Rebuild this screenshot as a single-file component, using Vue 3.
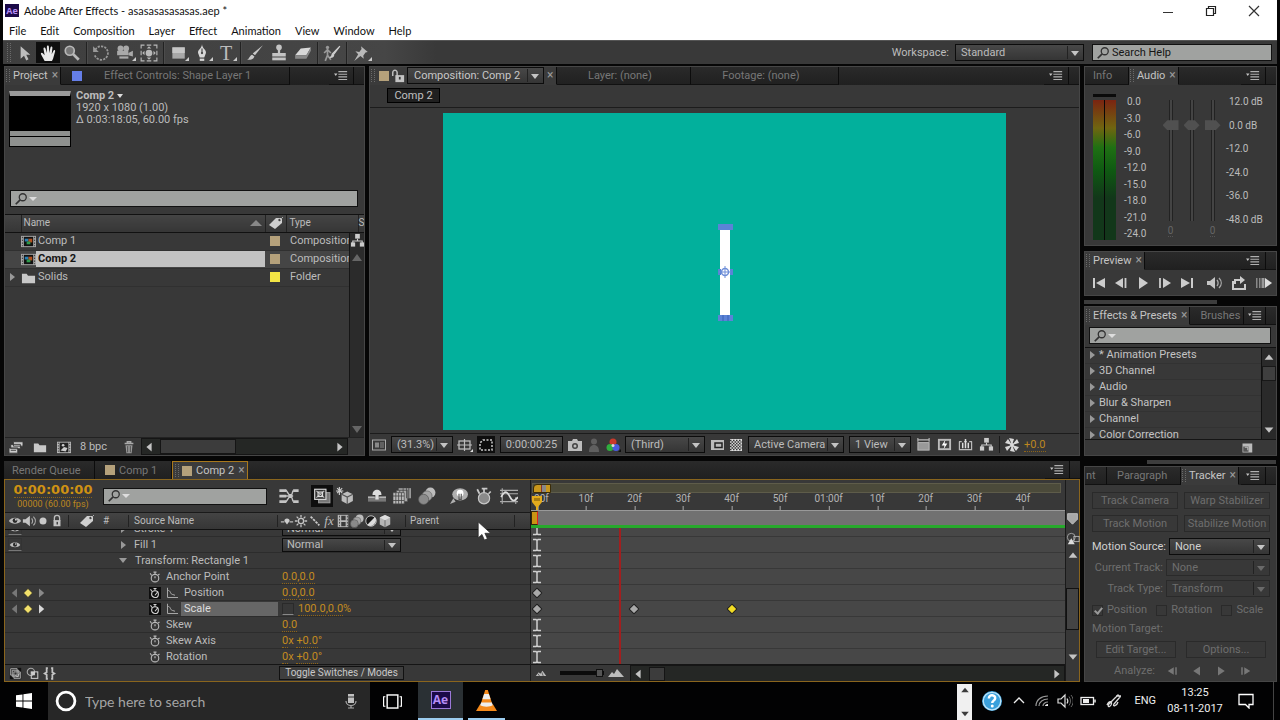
<script setup>
import { h } from 'vue'

const art = {
  select: '<path d="M5 2v11l3-2.6 2 4.2 2-1-2-4h3.6z" fill="#bdbdbd"/>',
  hand: '<path d="M5 15 2 9.500c-1-1.800.600-2.400 1.600-1.100L5 10 4 4.500c-.300-1.600 1.400-1.900 1.800-.400L7 8V2.500c0-1.600 1.700-1.600 1.800 0L9.200 8l1-4.800c.400-1.500 1.900-1.100 1.700.4L11.300 9l1.500-3c.7-1.200 1.900-.6 1.500.7L12.500 13l-1 2z" fill="#e8e8e8"/>',
  zoom: '<circle cx="6" cy="6" r="4" fill="#777" stroke="#b9b9b9" stroke-width="1.500"/><path d="m9 9 5 5" stroke="#b9b9b9" stroke-width="2.500"/>',
  rotate: '<path d="M3 5a6 6 0 1 1-.5 5" fill="none" stroke="#999" stroke-width="1.500" stroke-dasharray="2 1"/><path d="M1 2v5h5z" fill="#999"/>',
  camera: '<circle cx="4" cy="4" r="2.600" fill="#a9a9a9"/><circle cx="9" cy="4" r="2.600" fill="#a9a9a9"/><rect x="1" y="6" width="10" height="4" fill="#a9a9a9"/><rect x="3" y="11" width="8" height="2" fill="#a9a9a9"/><path d="m11 8 4-2v5l-4-1z" fill="#a9a9a9"/>',
  pan: '<path d="M1 4V1h3M6 1h4M12 1h3v3M1 12v3h3M6 15h4M12 15h3v-3M1 6v4M15 6v4" fill="none" stroke="#b9b9b9"/><circle cx="8" cy="8" r="3" fill="#b9b9b9"/><path d="M8 2l2 2H6zM8 14l2-2H6zM2 8l2-2v4zM14 8l-2-2v4z" fill="#b9b9b9"/>',
  rect: '<rect x="3" y="3" width="11" height="10" fill="#a8a8a8"/><path d="M3 3h11v5H3z" fill="#c6c6c6"/>',
  pen: '<path d="M8 0c0 4 4 5 3.500 8L10 12H6L4.500 8C4 5 8 4 8 0z" fill="#d8d8d8"/><path d="M8 4v4" stroke="#444"/><circle cx="8" cy="8" r="1" fill="#444"/><path d="M6 13h4v2H6z" fill="#d8d8d8"/>',
  brush: '<path d="M15 1 8 10 6 8.500z" fill="#c8c8c8"/><path d="M5.500 9.500 7.500 11c-1 3-4 3-6.500 3 2-1 2.500-4 4.500-4.500z" fill="#c8c8c8"/>',
  stamp: '<circle cx="8" cy="3" r="2.500" fill="#c4c4c4"/><path d="M7 5h2v3h5v3H2V8h5z" fill="#c4c4c4"/><rect x="2" y="12" width="12" height="2.500" fill="#c4c4c4"/>',
  eraser: '<path d="m6 4 9-1-4 7H1z" fill="#d8d8d8"/><path d="M1 10h10v3H1zM11 10l4-7v3l-4 7z" fill="#8a8a8a"/>',
  roto: '<circle cx="4" cy="3" r="1.500" fill="#999"/><path d="M4 5v5l-2 5M4 10l3 4M1 8l3-3 3 3" fill="none" stroke="#999" stroke-width="1.500"/><path d="m15 2-6 8-1-1z" fill="#ccc" stroke="#ccc"/><path d="M9 9c-2 0-2 3-4 3 2 1 5 0 5-2z" fill="#ccc"/>',
  pin: '<path d="m8 2 6 5-2 .500-2 3 .500 2.500-3-2.300L2 15l3.500-6L3 6.500l3.500.500 2-2.500z" fill="#b9b9b9"/>',
  menu: '<path d="M0 5h4L2 8z" fill="#c4c4c4"/><path d="M5 3h10M5 6h10M5 9h10M5 12h10" stroke="#b0b0b0" stroke-width="1.400"/>',
  lock: '<path d="M2 8V4a2.500 2.500 0 0 1 5 0v4" fill="none" stroke="#bdbdbd" stroke-width="1.700"/><rect x="5" y="7" width="10" height="8" fill="#c4c4c4"/><rect x="9" y="9" width="2" height="3" fill="#333"/>',
  closed: '<path d="M5 8V4.500a3 3 0 0 1 6 0V8" fill="none" stroke="#bdbdbd" stroke-width="1.500"/><rect x="4" y="7" width="8" height="7" fill="#c4c4c4"/><rect x="7.500" y="9" width="1.500" height="3" fill="#333"/>',
  search: '<circle cx="10" cy="6" r="4" fill="none" stroke="#333" stroke-width="1.500"/><path d="m7 9-5 5" stroke="#333" stroke-width="2"/>',
  film: '<rect x="0" y="2" width="16" height="12" fill="#a8a8a8"/><rect x="3" y="3" width="10" height="10" fill="#111"/><path d="M1.500 3v10M14.500 3v10" stroke="#333" stroke-dasharray="1.500 1.500"/><rect x="4" y="5" width="4" height="3" fill="#2a7fb4"/><rect x="8" y="5" width="4" height="4" fill="#b4501f"/><rect x="6" y="8" width="4" height="3" fill="#2f9a4c"/>',
  folder: '<path d="M1 4h5l1.500 2H15v8H1z" fill="#c8c8c8"/>',
  tag: '<path d="M1 10 8 3l6 0 0 5-7 6z" fill="#cfcfcf"/><circle cx="11.500" cy="5" r="1.200" fill="#444"/><path d="m12 5 3-3" stroke="#aaa"/>',
  tree: '<rect x="5.500" y="1" width="5" height="5" fill="#ccc"/><path d="M8 6v3M3 11V8.500h10V11" fill="none" stroke="#ccc" stroke-width="1.200"/><rect x="1" y="10" width="4.500" height="4.500" fill="#ccc"/><rect x="10.500" y="10" width="4.500" height="4.500" fill="#ccc"/>',
  interpret: '<path d="M5 2h11v5H5zM2 5h11v5H2zM0 9h10v6H0z" fill="#ccc" stroke="#333"/><path d="M2 12h6" stroke="#555"/>',
  comp: '<rect x="0" y="2" width="16" height="13" fill="#b8b8b8"/><rect x="3" y="3" width="10" height="11" fill="#222"/><path d="M1.500 3v11M14.500 3v11" stroke="#333" stroke-dasharray="1.500 1.500"/><circle cx="7" cy="6" r="1.500" fill="#ccc"/><path d="m4 12 4-4 4 1-2 4z" fill="#ccc"/>',
  trash: '<path d="M3 4h10M6 4V2h4v2" fill="none" stroke="#aaa" stroke-width="1.500"/><path d="M4 6h8l-1 9H5z" fill="#999"/><path d="M6.500 7v7M9.500 7v7" stroke="#444"/>',
  left: '<path d="M11 3v10L5 8z" fill="#c4c4c4"/>',
  right: '<path d="M5 3v10l6-5z" fill="#c4c4c4"/>',
  up: '<path d="M3 11h10L8 5z" fill="#c4c4c4"/>',
  down: '<path d="M3 5h10l-5 6z" fill="#c4c4c4"/>',
  always: '<rect x="1.500" y="3" width="13" height="10" fill="none" stroke="#aaa"/><rect x="4" y="5.500" width="4" height="5" fill="#888"/><path d="M9 6h4M9 8h4M9 10h4" stroke="#888"/>',
  grid: '<rect x="2" y="4" width="11" height="8" fill="none" stroke="#bbb" stroke-width="1.300"/><path d="M7.500 2v12M0 8h15" stroke="#bbb" stroke-width="1.200"/><path d="m13 15 3 0 0-3z" fill="#ddd"/>',
  mask: '<path d="M5 3h9v10H2V6z" fill="none" stroke="#ccc" stroke-width="1.500" stroke-dasharray="2 1.500"/>',
  snap: '<path d="M1 4h4l1-2h4l1 2h4v10H1z" fill="#bdbdbd"/><circle cx="8" cy="9" r="3" fill="#444"/><circle cx="8" cy="9" r="1.500" fill="#bdbdbd"/>',
  person: '<circle cx="8" cy="4.500" r="3" fill="#5f5f5f"/><path d="M3 15c0-5 2-7 5-7s5 2 5 7z" fill="#5f5f5f"/>',
  rgb: '<circle cx="8" cy="5" r="3.500" fill="#c83a2c"/><circle cx="5" cy="10.500" r="3.500" fill="#2fae3e"/><circle cx="11" cy="10.500" r="3.500" fill="#4a5ce0"/><circle cx="8" cy="8.500" r="1.500" fill="#ddd"/><path d="m13 15h3v-3z" fill="#111"/>',
  roi: '<rect x="2" y="3" width="13" height="10" fill="#bbb"/><rect x="6" y="6" width="7" height="4.500" fill="#bbb" stroke="#222" stroke-width="1.500"/>',
  checker: '<rect x="2" y="2" width="12" height="12" fill="#ddd"/><path d="M2 3.500h12M2 6.500h12M2 9.500h12M2 12.500h12" stroke="#333" stroke-width="1.500" stroke-dasharray="1.500 1.500"/><path d="M3.500 5h10M3.500 8h10M3.500 11h10" stroke="#333" stroke-width="1.500" stroke-dasharray="1.500 1.500"/>',
  aspect: '<rect x="2" y="6" width="12" height="8" fill="#999" stroke="#bbb"/><path d="M2 3h12M2 1v4M14 1v4" stroke="#bbb" stroke-width="1.200"/>',
  fast: '<rect x="1" y="2" width="14" height="12" fill="#bbb"/><rect x="3" y="4" width="10" height="8" fill="#444"/><path d="m9 3-4 6h3l-1 4 4-6H8z" fill="#fff"/>',
  tline: '<path d="M1.500 5v8.500h13V5M1 5h3M6.500 5h3M12 5h3" fill="none" stroke="#bbb" stroke-width="1.300"/><path d="M5 12V6M8 12V2M11 12V6" stroke="#ddd" stroke-width="1.600"/>',
  exposure: '<path d="M8 8 5 1l5 1zM8 8l5-6 2 4zM8 8l7 2-3 4zM8 8l3 7-5-1zM8 8l-5 6-2-4zM8 8 1 6l3-4z" fill="#d8d8d8"/><circle cx="8" cy="8" r="2" fill="#d8d8d8"/>',
  eye: '<path d="M1 8c3-5 11-5 14 0-3 4-11 4-14 0z" fill="#bdbdbd"/><circle cx="8" cy="7.500" r="2.700" fill="#2a2a2a"/><circle cx="9" cy="6.500" r="1" fill="#ddd"/>',
  speaker: '<path d="M1 6h3l5-4v12l-5-4H1z" fill="#c4c4c4"/><path d="M11 5c1.500 2 1.500 4 0 6M13 3c3 3 3 7 0 10" fill="none" stroke="#aaa" stroke-width="1.300"/>',
  dot: '<circle cx="8" cy="8" r="4" fill="#c8c8c8"/>',
  flow: '<path d="M1 3h5v2H1zM1 7h5v2H1zM1 11h5v2H1zM11 3h4v2h-4zM11 11h4v2h-4z" fill="#c4c4c4"/><path d="M5 4h1l2 3h2l1-3M5 8h6M5 12h1l2-3h2l1 3" fill="none" stroke="#c4c4c4"/>',
  live: '<rect x="5" y="5" width="10" height="9" fill="#777" stroke="#999"/><rect x="1.500" y="2" width="10" height="9" fill="#333" stroke="#ddd"/><path d="m3 3.500 7 6M10 3.500l-7 6" stroke="#bbb"/><rect x="4.500" y="4.500" width="4" height="4" fill="none" stroke="#ddd"/>',
  draft: '<path d="m10 4 5 2.500v6L10 15l-5-2.500v-6z" fill="#bdbdbd"/><path d="m5 6.500 5 2.500 5-2.500M10 9v6" fill="none" stroke="#555"/><path d="M3 0v7M0 3.500h6.500M1 1l4.500 4.500M5.500 1 1 5.500" stroke="#ccc"/>',
  shy: '<path d="M0 9h16v4H0z" fill="#777"/><path d="M4 7c0-6 8-6 8 0H9.500v4h-3V7z" fill="#ddd"/><path d="M0 9h6M10 9h6" stroke="#ccc"/>',
  blend: '<path d="M5 1h11v9H5z" fill="#999"/><path d="M3 3h10v10H3z" fill="#aaa" stroke="#444" stroke-width=".600"/><path d="M0 5h10v10H0z" fill="#bbb" stroke="#444" stroke-width=".600"/><path d="M2.500 5v10M5 5v10M7.500 5v10M0 8h10M0 12h10M6 3v2M9 1v4M12 1v9M14 1v9" stroke="#444" stroke-width=".700"/>',
  blur: '<circle cx="11" cy="5" r="4.500" fill="#bdbdbd"/><circle cx="8" cy="8" r="4.500" fill="#a4a4a4" stroke="#666" stroke-width=".600"/><circle cx="5" cy="11" r="4.500" fill="#8a8a8a" stroke="#555" stroke-width=".600"/>',
  brain: '<ellipse cx="9" cy="6.500" rx="7" ry="5.500" fill="#b0b0b0"/><circle cx="9" cy="5.500" r="3" fill="#fff"/><path d="M8 6v5h2V6" stroke="#555" fill="none"/><path d="M3 10 0 15l5-2z" fill="#b0b0b0"/>',
  watch: '<circle cx="8" cy="9.500" r="5" fill="none" stroke="#b8b8b8" stroke-width="1.500"/><path d="M6 1.500h4M8 2v3M1.500 3l2 3M14 4l-2 1.500M8 9.500V7" stroke="#b8b8b8" stroke-width="1.500"/>',
  watchbig: '<circle cx="8" cy="10" r="5" fill="#8a8a8a" stroke="#c8c8c8"/><path d="M6 1.500h5M8 2v3M2 2l2 4M14 4l-2 2" stroke="#c8c8c8" stroke-width="1.500"/>',
  watchon: '<rect width="16" height="16" fill="#0d0d0d"/><circle cx="8" cy="9.500" r="4.500" fill="none" stroke="#d0d0d0" stroke-width="1.500"/><path d="M6 2h4M8 2v3M2 3l2 3M8 11l4-5" stroke="#d0d0d0" stroke-width="1.500"/>',
  graph: '<path d="M2 1v13h14" fill="none" stroke="#aaa" stroke-width="1.300"/><path d="M2 5c4-2 4 6 7 5l3 1" fill="none" stroke="#aaa" stroke-width="1.300"/>',
  curve: '<path d="M0 3h16M0 6h16M0 13h16M2 1v14M14 9v6" stroke="#aaa"/><path d="M1 9c3-6 5-6 8 0 2 4 4 4 7 0" fill="none" stroke="#ddd" stroke-width="1.500"/>',
  shysm: '<path d="M1 9h4M11 9h4" stroke="#bbb" stroke-width="1.500"/><path d="M5 8a3 3 0 0 1 6 0L8 12z" fill="#ccc"/>',
  sun: '<circle cx="8" cy="8" r="3" fill="none" stroke="#c4c4c4" stroke-width="1.500"/><path d="M8 1v3M8 12v3M1 8h3M12 8h3M3 3l2 2M11 11l2 2M13 3l-2 2M5 11l-2 2" stroke="#c4c4c4" stroke-width="1.500"/>',
  slash: '<path d="m3 3 10 10" stroke="#c8c8c8" stroke-width="2" stroke-dasharray="3 1"/>',
  filmsm: '<rect x="2" y="1" width="12" height="14" fill="#b8b8b8"/><path d="M6 2h5v5H6zM6 9h5v5H6z" fill="#3a3a3a"/><path d="M4 2v12M13 2v12" stroke="#444" stroke-dasharray="2 1.500"/>',
  half: '<circle cx="8" cy="8" r="6" fill="#1a1a1a" stroke="#ccc"/><path d="M12.500 3.500A6.500 6.500 0 0 1 3.500 12.500z" fill="#ddd"/>',
  cube: '<path d="m8 1 6 3v8l-6 3-6-3V4z" fill="#b4b4b4"/><path d="m2 4 6 3 6-3-6-3z" fill="#ddd"/><path d="M8 7v8" stroke="#666"/>',
  prevkey: '<path d="M12 2v12L5 8z" fill="#777"/>',
  nextkey: '<path d="M4 2v12l7-6z" fill="#8a8a8a"/>',
  nextlit: '<path d="M4 2v12l7-6z" fill="#d8d8d8"/>',
  keyon: '<path d="m8 2 6 6-6 6-6-6z" fill="#f2e06a" stroke="#222"/>',
  key: '<path d="m8 1 7 7-7 7-7-7z" fill="#a9a9a9" stroke="#1d1d1d" stroke-width="1.500"/>',
  keysel: '<path d="m8 1 7 7-7 7-7-7z" fill="#f2dc24" stroke="#1d1d1d" stroke-width="1.500"/>',
  ibeam: '<path d="M4 2.500h3L8 3.500 9 2.500h3M4 13.500h3l1-1 1 1h3M8 3.500v9" fill="none" stroke="#d0d0d0" stroke-width="1.500"/>',
  lay1: '<rect x="1" y="1" width="14" height="14" fill="#111"/><path d="M2 2h8v8H2zM4 4h8v8H4zM6 6h8v8H6z" fill="#333" stroke="#bbb"/><path d="m8 10 2 2 3-4" fill="none" stroke="#ddd"/>',
  lay2: '<circle cx="6" cy="6" r="4.500" fill="none" stroke="#aaa" stroke-width="1.300"/><rect x="6.500" y="6" width="8" height="8" fill="none" stroke="#ccc" stroke-width="1.300"/><path d="M6 6h5v4H7z" fill="#ccc"/>',
  lay3: '<path d="M6 1.500H4.500v5L2 8l2.500 1.500v5H6M10 1.500h1.500v5L14 8l-2.500 1.500v5H10" fill="none" stroke="#c4c4c4" stroke-width="2.200"/>',
  mtnS: '<path d="m1 12 4-5 2 2 3-4 5 7z" fill="#bbb"/><path d="m4 9 2 3M9 7l2 5" stroke="#444"/>',
  mtnL: '<path d="m0 12 4-5 2 2 3-5 7 8z" fill="#bbb"/>',
  marker: '<path d="M2 2h12v7l-6 6-6-6z" fill="#a8a8a8" stroke="#ccc"/>',
  compbtn: '<circle cx="6" cy="6" r="4.500" fill="none" stroke="#aaa"/><rect x="9" y="5" width="6" height="6" fill="none" stroke="#bbb"/><path d="m2 14 4-7 4 7z" fill="#ddd"/>',
  first: '<path d="M3 3v10" stroke="#ccc" stroke-width="2"/><path d="M14 3v10L5 8z" fill="#ccc"/>',
  back: '<path d="M10 3v10L2 8z" fill="#ccc"/><path d="M12.500 3v10" stroke="#ccc" stroke-width="1.800"/>',
  play: '<path d="M4 2v12l9-6z" fill="#ccc"/>',
  fwd: '<path d="M6 3v10l8-5z" fill="#ccc"/><path d="M3 3v10" stroke="#ccc" stroke-width="1.800"/>',
  last: '<path d="M13 3v10" stroke="#ccc" stroke-width="2"/><path d="M2 3v10l9-5z" fill="#ccc"/>',
  loop: '<path d="M4 7H2v7h12V9" fill="none" stroke="#ccc" stroke-width="2"/><path d="M4 9V5h6" fill="none" stroke="#ccc" stroke-width="2"/><path d="M9 1v8l5-4z" fill="#ccc"/>',
  ram: '<path d="M0 3h1.500v10H0zM3 3h1.500v10H3z" fill="#888"/><path d="M5.500 3h3v10h-3z" fill="#999"/><path d="M9 3v10l7-5z" fill="#ddd"/>',
  newpre: '<rect x="2" y="2" width="13" height="12" fill="#bbb"/><rect x="3" y="6" width="7" height="7" fill="#555"/><path d="M5 7h4v4" fill="none" stroke="#ddd"/>',
  aback: '<path d="M9 3v10L1 8zM11 3h2v10h-2z" fill="#777"/>',
  aleft: '<path d="M12 2v12L3 8z" fill="#777"/>',
  aright: '<path d="M4 2v12l9-6z" fill="#777"/>',
  afwd: '<path d="M7 3v10l8-5zM3 3h2v10H3z" fill="#777"/>',
  win: '<path d="M0 2.300 6.500 1.400v6.100H0zM7.400 1.300 16 0v7.500H7.400zM0 8.400h6.500v6.200L0 13.700zM7.400 8.400H16V16l-8.600-1.200z" fill="#fff"/>',
  ring: '<circle cx="8" cy="8" r="6.500" fill="none" stroke="#fff" stroke-width="2"/>',
  mic: '<rect x="5" y="1" width="6" height="9" fill="#c0c0c0"/><path d="M5 4h6" stroke="#333"/><path d="M3 8c0 6 10 6 10 0M8 12v3M5 15h6" fill="none" stroke="#aaa" stroke-width="1.200"/>',
  task: '<rect x="3.500" y="2.500" width="9" height="11" fill="none" stroke="#fff" stroke-width="1.200"/><path d="M2 4H.500v8H2M14 4h1.500v8H14" fill="none" stroke="#fff"/>',
  vlc: '<path d="M3 11h10l3 5H0z" fill="#f58a1b"/><path d="M7 0h2l4 12.500c-2 1.500-8 1.500-10 0z" fill="#f58a1b"/><path d="m6.200 3 3.600 0 1.300 4H4.900zM3.900 9.500h8.200l.7 2.200c-2 1.300-7.600 1.300-9.600 0z" fill="#eee"/>',
  help: '<circle cx="8" cy="8" r="8" fill="#3aa0dc"/><circle cx="8" cy="8" r="7" fill="none" stroke="#bfe3f7"/><path d="M5.500 6c0-4 5.500-3 5 0-.300 1.800-2.300 1.700-2.300 3.500" fill="none" stroke="#fff" stroke-width="2"/><circle cx="8.200" cy="12" r="1.200" fill="#fff"/>',
  caret: '<path d="m3 10 5-5 5 5" fill="none" stroke="#eee" stroke-width="1.300"/>',
  wifi: '<path d="M2 13c0-6 5-10 12-10M5 13c0-4 4-7 9-7M9 13c0-2 2-4 5-4" fill="none" stroke="#999" stroke-width="1.200"/><path d="M11 13c0-1 1-2 3-2v2z" fill="#eee"/>',
  vol: '<path d="M1 6h3l4-4v12l-4-4H1z" fill="none" stroke="#ddd" stroke-width="1.200"/><path d="M10 5.500c1 1.500 1 3.500 0 5" fill="none" stroke="#ddd" stroke-width="1.200"/><path d="M12 3.500c2 3 2 6 0 9M14 2c3 4 3 8 0 12" fill="none" stroke="#666"/>',
  batt: '<rect x="1" y="4.500" width="12.500" height="7" fill="none" stroke="#eee" stroke-width="1.300"/><rect x="3" y="6" width="6" height="4" fill="#eee"/><path d="M15 6.500v3" stroke="#eee" stroke-width="1.500"/>',
  ink: '<path d="M1 12c2-5 6-4 4 0-2 3-4 1-2-1l9-9 2 2-6 7c-2 3 3 2 4-2M10 3l5 0" fill="none" stroke="#ddd" stroke-width="1.300"/>',
  note: '<path d="M1 1.500h14v10h-4V15l-3.500-3.500H1z" fill="none" stroke="#fff" stroke-width="1.300"/>',
  min: '<path d="M3 9.500h10" stroke="#333"/>',
  max: '<path d="M3.500 5.500h7v7h-7zM5.500 5.500v-2h7v7h-2" fill="none" stroke="#222" stroke-width="1.200"/>',
  x: '<path d="m3 3 10 10M13 3 3 13" stroke="#333" stroke-width="1.200"/>',
  cursor: '<path d="M2 0v14l3.300-3 2.200 5 2.600-1.100-2.200-4.900H13z" fill="#fff" stroke="#222" stroke-width=".600"/>'
}
const Icon = (p) => h('svg', { viewBox: '0 0 16 16', width: p.s || 16, height: p.s || 16, class: 'ico', 'aria-hidden': 'true', innerHTML: art[p.n] })
Icon.props = ['n', 's']

const menus = ['File', 'Edit', 'Composition', 'Layer', 'Effect', 'Animation', 'View', 'Window', 'Help']
const tools = [['select', 'hand', 'zoom'], ['rotate', 'camera', 'pan'], ['rect', 'pen', 'type'], ['brush', 'stamp', 'eraser'], ['roto'], ['pin']]
const flyouts = ['camera', 'rect', 'pen', 'type', 'pin']
const items = [
  { name: 'Comp 1', icon: 'film', type: 'Composition', color: 'tan' },
  { name: 'Comp 2', icon: 'film', type: 'Composition', color: 'tan', sel: true },
  { name: 'Solids', icon: 'folder', type: 'Folder', color: 'yellow' }
]
const meter = ['0.0', '-3.0', '-6.0', '-9.0', '-12.0', '-15.0', '-18.0', '-21.0', '-24.0']
const scale = ['12.0 dB', '0.0 dB', '-12.0', '-24.0', '-36.0', '-48.0 dB']
const effects = ['* Animation Presets', '3D Channel', 'Audio', 'Blur & Sharpen', 'Channel', 'Color Correction']
const rows = [
  { name: 'Stroke 1', kind: 'fill' },
  { name: 'Fill 1', kind: 'fill' },
  { name: 'Transform: Rectangle 1', kind: 'group' },
  { name: 'Anchor Point', v: ['0.0', ',', '0.0'] },
  { name: 'Position', keyed: true, v: ['0.0', ',', '0.0'], keys: [0] },
  { name: 'Scale', keyed: true, sel: true, v: ['100.0', ',', '0.0', '%'], keys: [0, 20, 40] },
  { name: 'Skew', v: ['0.0'] },
  { name: 'Skew Axis', v: ['0', 'x ', '+0.0', '°'] },
  { name: 'Rotation', v: ['0', 'x ', '+0.0', '°'] }
]
const at = (f) => 1.2 + f * 0.909 + '%'
const ticks = ['10f', '20f', '30f', '40f', '50f', '01:00f', '10f', '20f', '30f', '40f'].map((t, i) => ({ t, f: (i + 1) * 10 }))
const columns = ['shysm', 'sun', 'slash', 'fx', 'filmsm', 'blur', 'half', 'cube']
const previews = ['first', 'back', 'play', 'fwd', 'last', 'speaker', 'loop', 'ram']
const tracks = [['Motion Source:', 'None', false], ['Current Track:', 'None', true], ['Track Type:', 'Transform', true]]
</script>

<template>
  <div class="app">
    <div class="window">
      <header class="title">
        <span class="ae small">Ae</span><span class="doc">Adobe After Effects - asasasasasasas.aep *</span>
        <div class="winbtns">
          <button aria-label="Minimize"><Icon n="min" /></button>
          <button aria-label="Restore"><Icon n="max" /></button>
          <button aria-label="Close"><Icon n="x" /></button>
        </div>
      </header>
      <nav class="menu"><button v-for="m in menus" :key="m">{{ m }}</button></nav>

      <div class="toolbar">
        <i class="grip"></i>
        <template v-for="(g, i) in tools" :key="i">
          <i v-if="i" class="tsep"></i>
          <button v-for="t in g" :key="t" class="tool" :class="{ on: t === 'hand', fly: flyouts.includes(t) }" :aria-label="t">
            <span v-if="t === 'type'" class="tee">T</span><Icon v-else :n="t" :s="18" />
          </button>
        </template>
        <i class="sheen"></i>
        <label class="ws" for="workspace">Workspace:</label>
        <span class="sel wssel"><select id="workspace"><option>Standard</option></select></span>
        <label class="search help"><Icon n="search" :s="14" /><input aria-label="Search Help" placeholder="Search Help"></label>
      </div>

      <main class="work">
        <div class="leftcol">
          <div class="upper">
            <section class="panel project">
              <div class="tabs">
                <div class="tab active"><i class="grip"></i>Project<b>×</b></div>
                <div class="tab fxtab"><i class="sw blue"></i><span>Effect Controls: Shape Layer 1</span></div>
                <button class="pm" aria-label="Panel menu"><Icon n="menu" :s="14" /></button><i class="end"></i>
              </div>
              <div class="info">
                <div class="thumb"><i></i><i></i></div>
                <div class="meta"><strong>Comp 2 <span class="tri"></span></strong><span>1920 x 1080 (1.00)</span><span>Δ 0:03:18:05, 60.00 fps</span></div>
              </div>
              <label class="search psearch"><Icon n="search" :s="14" /><i class="dd"></i><input aria-label="Search project"></label>
              <div class="list">
                <table>
                  <thead><tr><th class="tw"></th><th class="nm">Name<i class="sort"></i></th><th class="lb"><Icon n="tag" /></th><th class="ty">Type</th><th class="sz">S</th></tr></thead>
                  <tbody>
                    <tr v-for="it in items" :key="it.name" :class="{ picked: it.sel }">
                      <td><i v-if="it.icon === 'folder'" class="twirl"></i></td>
                      <td><div class="item"><Icon :n="it.icon" :s="15" /><span>{{ it.name }}</span></div></td>
                      <td><i class="sw" :class="it.color"></i></td>
                      <td class="tyd" colspan="2">{{ it.type }}</td>
                    </tr>
                  </tbody>
                </table>
                <div class="rail"><Icon n="tree" :s="15" /><i class="u"></i><i class="d"></i></div>
              </div>
              <div class="pfoot">
                <Icon n="interpret" /><Icon n="folder" /><Icon n="comp" /><span>8 bpc</span><Icon n="trash" class="bin" />
                <div class="hbar"><Icon n="left" :s="14" /><i></i><Icon n="right" :s="14" /></div>
              </div>
            </section>

            <section class="panel viewer">
              <div class="tabs">
                <div class="tab active vt"><i class="grip"></i><i class="sw tan"></i><Icon n="lock" :s="14" />
                  <span class="sel vsel"><select aria-label="Viewer"><option>Composition: Comp 2</option></select></span><b>×</b></div>
                <div class="tab wide">Layer: (none)</div><div class="tab wide foot">Footage: (none)</div>
                <button class="pm" aria-label="Panel menu"><Icon n="menu" :s="14" /></button><i class="end"></i>
              </div>
              <div class="crumb"><button>Comp 2</button></div>
              <div class="stage">
                <svg viewBox="0 0 563 317" class="canvas">
                  <rect width="563" height="317" fill="#02b09c" />
                  <rect x="277" y="113" width="10" height="93" fill="#fff" />
                  <g fill="#5b83d6"><path d="M275 111h15v6h-15zM275 202h15v6h-15zM275 156h3v6h-3zM287 156h3v6h-3z" /></g>
                  <path d="M280 202v6M285 202v6" stroke="#3a62b8" />
                  <circle cx="282" cy="159" r="3.500" fill="none" stroke="#6f8fd8" stroke-width="1.500" /><path d="M276 159h12M282 153v12" stroke="#6f8fd8" />
                </svg>
              </div>
              <div class="vfoot">
                <Icon n="always" />
                <span class="sel w62"><select aria-label="Magnification"><option>(31.3%)</option></select></span>
                <Icon n="grid" /><span class="pressed"><Icon n="mask" /></span>
                <button class="tc">0:00:00:25</button>
                <Icon n="snap" /><Icon n="person" /><Icon n="rgb" />
                <span class="sel w79"><select aria-label="Resolution"><option>(Third)</option></select></span>
                <Icon n="roi" /><Icon n="checker" />
                <span class="sel w96"><select aria-label="3D view"><option>Active Camera</option></select></span>
                <span class="sel w62"><select aria-label="View layout"><option>1 View</option></select></span>
                <div class="vicons"><Icon n="aspect" :s="15" /><Icon n="fast" :s="15" /><Icon n="tline" :s="15" /><Icon n="tree" :s="15" /></div>
                <i class="vsep"></i><Icon n="exposure" /><span class="hot">+0.0</span>
              </div>
            </section>
          </div>

          <section class="timeline">
            <div class="tabs ttabs">
              <div class="tab rq">Render Queue</div>
              <div class="tab c1"><i class="sw tan"></i>Comp 1</div>
              <div class="tab active c2"><i class="grip"></i><i class="sw tan"></i>Comp 2<b>×</b></div>
              <button class="pm" aria-label="Panel menu"><Icon n="menu" :s="14" /></button><i class="end"></i>
            </div>
            <div class="tbody">
              <div class="tl">
                <div class="tctl">
                  <div class="time"><strong>0:00:00:00</strong><span>00000 (60.00 fps)</span></div>
                  <label class="search tsearch"><Icon n="search" :s="14" /><i class="dd"></i><input aria-label="Search layers"></label>
                  <div class="tbtns"><Icon n="flow" :s="22" /><span class="pressed"><Icon n="live" :s="18" /></span><Icon n="draft" :s="18" class="draft" /><i></i><Icon n="shy" :s="18" /><Icon n="blend" :s="18" /><Icon n="blur" :s="18" /><i></i><Icon n="brain" :s="18" /><Icon n="watchbig" :s="18" /><Icon n="curve" :s="18" /></div>
                </div>
                <div class="thead">
                  <div class="av"><Icon n="eye" :s="14" /><Icon n="speaker" :s="14" /><Icon n="dot" :s="14" /><Icon n="closed" :s="14" /></div>
                  <div class="num"><Icon n="tag" /><span>#</span></div>
                  <div class="src">Source Name</div>
                  <div class="sws"><template v-for="c in columns" :key="c"><em v-if="c === 'fx'">fx</em><Icon v-else :n="c" :s="14" /></template></div>
                  <div class="par">Parent</div><div class="tail"></div>
                </div>
                <div class="rows">
                  <div v-for="r in rows" :key="r.name" class="row">
                    <div class="av">
                      <span v-if="r.kind === 'fill'" class="eyebox"><Icon n="eye" :s="12" /></span>
                      <template v-if="r.keyed"><Icon n="prevkey" :s="12" /><Icon n="keyon" :s="12" /><Icon :n="r.sel ? 'nextlit' : 'nextkey'" :s="12" /></template>
                    </div>
                    <div class="nme" :class="{ prop: !r.kind }">
                      <i v-if="r.kind" class="twirl" :class="{ open: r.kind === 'group' }"></i>
                      <Icon v-else :n="r.keyed ? 'watchon' : 'watch'" :s="12" />
                      <Icon v-if="r.keyed" n="graph" :s="12" />
                      <span :class="{ hl: r.sel, kn: r.keyed }">{{ r.name }}</span>
                    </div>
                    <div class="val">
                      <span v-if="r.kind === 'fill'" class="sel mode"><select aria-label="Blend mode"><option>Normal</option></select></span>
                      <input v-if="r.sel" type="checkbox" aria-label="Constrain proportions">
                      <span v-if="r.v" class="nums"><template v-for="(p, i) in r.v" :key="i"><u v-if="/\d/.test(p)">{{ p }}</u><template v-else>{{ p }}</template></template></span>
                    </div>
                  </div>
                </div>
                <div class="tfoot"><Icon n="lay1" :s="13" /><Icon n="lay2" :s="13" /><Icon n="lay3" :s="13" /><button>Toggle Switches / Modes</button></div>
              </div>

              <div class="tr">
                <div class="navi"><i></i></div>
                <div class="ruler">
                  <span v-for="k in ticks" :key="k.f" class="tick" :style="{ left: at(k.f) }">{{ k.t }}</span>
                  <span class="tick zero" :style="{ left: at(0) }">0:00f</span>
                  <svg class="head" :style="{ left: at(0) }" viewBox="0 0 12 16" width="12" height="16"><path d="M1 2h10v6l-4 5v3H5v-3L1 8z" fill="#e3ab1d" /><path d="M4 4v3M6 4v3M8 4v3" stroke="#6b4d08" /></svg>
                </div>
                <div class="warea"><i></i></div>
                <div class="rows tracks">
                  <div v-for="r in rows" :key="r.name" class="row">
                    <template v-if="r.keys"><span v-for="k in r.keys" :key="k" class="kf" :style="{ left: at(k) }"><Icon :n="k === 40 ? 'keysel' : 'key'" :s="11" /></span></template>
                    <span v-else class="kf" :style="{ left: at(0) }"><Icon n="ibeam" :s="16" /></span>
                  </div>
                  <i class="red" :style="{ left: at(17) }"></i>
                </div>
                <div class="tfoot zoombar"><Icon n="mtnS" :s="12" /><input type="range" aria-label="Timeline zoom" value="96"><Icon n="mtnL" :s="16" /><div class="hbar"><Icon n="left" :s="14" /><i></i><Icon n="right" :s="14" /></div></div>
              </div>
              <div class="trail"><span class="mk"><Icon n="marker" :s="13" /></span><span class="cb"><Icon n="compbtn" :s="14" /></span><Icon n="up" :s="14" /><i></i><Icon n="down" :s="14" /></div>
            </div>
            <span class="mouse"><Icon n="cursor" :s="18" /></span>
          </section>
        </div>

        <aside class="rightcol">
          <section class="panel audio">
            <div class="tabs"><div class="tab inf">Info</div><div class="tab active"><i class="grip"></i>Audio<b>×</b></div><button class="pm" aria-label="Panel menu"><Icon n="menu" :s="14" /></button><i class="end"></i></div>
            <div class="abody">
              <div class="meter"><i></i><i></i></div>
              <div class="mlab"><span v-for="m in meter" :key="m">{{ m }}</span></div>
              <div class="sliders">
                <label v-for="n in 3" :key="n"><input type="range" min="-48" max="12" value="1" :class="'k' + n" :aria-label="'Level ' + n"><span v-if="n !== 2">0</span></label>
              </div>
              <div class="slab"><span v-for="m in scale" :key="m">{{ m }}</span></div>
            </div>
          </section>
          <section class="panel preview">
            <div class="tabs"><div class="tab active"><i class="grip"></i>Preview<b>×</b></div><button class="pm" aria-label="Panel menu"><Icon n="menu" :s="14" /></button><i class="end"></i></div>
            <div class="pbtns"><button v-for="p in previews" :key="p" :aria-label="p"><Icon :n="p" :s="16" /></button></div>
          </section>
          <i class="strip"></i>
          <section class="panel effects">
            <div class="tabs"><div class="tab active"><i class="grip"></i>Effects &amp; Presets<b>×</b></div><div class="tab br">Brushes</div><button class="pm" aria-label="Panel menu"><Icon n="menu" :s="14" /></button><i class="end"></i></div>
            <label class="search esearch"><Icon n="search" :s="14" /><i class="dd"></i><input aria-label="Search effects"></label>
            <div class="elist">
              <ul><li v-for="e in effects" :key="e"><i class="twirl"></i>{{ e }}</li></ul>
              <div class="erail"><Icon n="up" :s="14" /><i></i><Icon n="down" :s="14" /></div>
            </div>
            <div class="efoot"><Icon n="newpre" :s="12" /></div>
          </section>
          <i class="strip rt"></i>
          <section class="panel tracker">
            <div class="tabs"><div class="tab nt">nt</div><div class="tab pg">Paragraph</div><div class="tab active"><i class="grip"></i>Tracker<b>×</b></div><button class="pm" aria-label="Panel menu"><Icon n="menu" :s="14" /></button><i class="end"></i></div>
            <div class="kbody">
              <div class="pair"><button disabled>Track Camera</button><button disabled>Warp Stabilizer</button></div>
              <div class="pair"><button disabled>Track Motion</button><button disabled>Stabilize Motion</button></div>
              <div v-for="(t, i) in tracks" :key="i" class="krow" :class="{ dim: t[2] }"><label :for="'trk' + i">{{ t[0] }}</label><span class="sel"><select :id="'trk' + i" :disabled="t[2]"><option>{{ t[1] }}</option></select></span></div>
              <div class="checks dim"><label><input type="checkbox" checked disabled>Position</label><label><input type="checkbox" disabled>Rotation</label><label><input type="checkbox" disabled>Scale</label></div>
              <div class="dim mt">Motion Target:</div>
              <div class="pair narrow"><button disabled>Edit Target...</button><button disabled>Options...</button></div>
              <div class="dim ana">Analyze:<Icon n="aback" :s="12" /><Icon n="aleft" :s="12" /><Icon n="aright" :s="12" /><Icon n="afwd" :s="12" /></div>
            </div>
          </section>
        </aside>
      </main>
    </div>

    <footer class="taskbar">
      <button class="start" aria-label="Start"><Icon n="win" /></button>
      <label class="cortana"><Icon n="ring" :s="22" /><input placeholder="Type here to search" aria-label="Type here to search"><Icon n="mic" /></label>
      <button class="tv" aria-label="Task view"><Icon n="task" :s="19" /></button>
      <button class="app1" aria-label="After Effects"><span class="ae">Ae</span></button>
      <button class="app2" aria-label="VLC"><Icon n="vlc" :s="21" /></button>
      <div class="tray">
        <div class="nudge"><Icon n="up" :s="12" /><Icon n="down" :s="12" /></div>
        <Icon n="help" :s="20" class="qm" /><Icon n="caret" /><Icon n="wifi" /><Icon n="vol" /><Icon n="batt" /><Icon n="ink" class="ink" />
        <span class="lang">ENG</span>
        <div class="clock"><span>13:25</span><span>08-11-2017</span></div>
        <Icon n="note" /><i class="peek"></i>
      </div>
    </footer>
  </div>
</template>

<style>
html, body { margin: 0; background: #000; }
</style>
<style scoped>
* { box-sizing: border-box; }
.app { height: 100vh; min-height: 680px; display: flex; flex-direction: column; background: #060606; color: #bcbcbc; font: 11px/14px Roboto, "Liberation Sans", sans-serif; overflow: hidden; }
button, input, select { font: inherit; color: inherit; margin: 0; padding: 0; border: 0; background: none; border-radius: 0; outline: 0; }
button { white-space: nowrap; }
.ico { display: block; flex: none; }
i { display: block; flex: none; font-style: normal; }
.window { flex: 1; min-height: 0; display: flex; flex-direction: column; padding: 0 3px; }

.title, .menu { background: #fff; color: #111; font-family: Lato, sans-serif; flex: none; display: flex; align-items: center; height: 20px; }
.title { padding: 0 2px; height: 21px; }
.ae { display: grid; place-items: center; background: #1b0a48; color: #b58cf5; border: 1px solid #9a78d8; font: bold 12px/16px "Open Sans", sans-serif; width: 20px; height: 18px; }
.ae.small { width: 14px; height: 13px; font-size: 9px; line-height: 10px; border: 0; }
.doc { margin-left: 5px; }
.winbtns { margin-left: auto; display: flex; }
.winbtns button { width: 43px; display: grid; place-items: center; }
.menu { padding-left: 6px; gap: 14px; height: 19px; }

.toolbar { height: 24px; flex: none; display: flex; align-items: center; background: linear-gradient(90deg, #3e3e3e, #464646 30%, #393939 34%); border-top: 1px solid #555; padding-left: 4px; }
.grip { width: 4px; height: 13px; background: repeating-linear-gradient(#6a6a6a 0 1px, transparent 1px 2px); margin-right: 3px; -webkit-mask: linear-gradient(90deg, #000 1px, transparent 1px 3px, #000 3px); mask: linear-gradient(90deg, #000 1px, transparent 1px 3px, #000 3px); }
.toolbar .grip { height: 20px; margin-right: 1px; }
.tool { width: 24px; height: 21px; display: grid; place-items: center; position: relative; }
.tool.on { background: #0e0e0e; }
.tool.fly::after { content: ""; position: absolute; right: 1px; bottom: 2px; border: 2px solid; border-color: transparent #ccc #ccc transparent; }
.tee { font: 20px/20px "Liberation Serif", serif; }
.tsep { width: 5px; height: 22px; background: linear-gradient(90deg, transparent 2px, #222 2px 3px, #4c4c4c 3px 4px, transparent 4px); }
.sheen { flex: 1; }
.ws { margin-right: 6px; }
.sel { display: flex; position: relative; height: 17px; border: 1px solid #0c0c0c; background: linear-gradient(#484848, #353535); }
.sel select { appearance: none; flex: 1; min-width: 0; padding: 0 18px 0 5px; line-height: 15px; opacity: 1; }
.sel option { background: #333; }
.sel::before { content: ""; position: absolute; right: 4px; top: 6px; border: 4px solid transparent; border-top: 5px solid #c4c4c4; border-bottom: 0; pointer-events: none; }
.sel::after { content: ""; position: absolute; right: 15px; top: 1px; bottom: 1px; width: 1px; background: #222; }
.wssel { width: 129px; margin-right: 8px; }
.search { display: flex; align-items: center; background: #a0a2a0; border: 1px solid #111; height: 17px; padding-left: 3px; color: #151515; }
.search input { flex: 1; min-width: 0; }
.search input::placeholder { color: #151515; opacity: 1; }
.dd { border: 4px solid transparent; border-top: 4px solid #ddd; border-bottom: 0; margin-left: 1px; }
.help { width: 180px; margin-right: 5px; gap: 2px; }

.work { flex: 1; min-height: 0; display: flex; gap: 4px; padding: 2px 0 0 1px; }
.leftcol { flex: 1; min-width: 0; display: flex; flex-direction: column; gap: 5px; }
.upper { flex: 1; min-height: 0; display: flex; gap: 4px; }
.panel { background: #383838; display: flex; flex-direction: column; border: 1px solid #464646; min-width: 0; }
.tabs { height: 18px; flex: none; display: flex; background: linear-gradient(#2a2a2a, #202020); color: #777; line-height: 15px; }
.tab { display: flex; align-items: center; flex: none; padding: 0 8px; border-right: 1px solid #0c0c0c; border-bottom: 1px solid #111; white-space: nowrap; }
.tab b { font-weight: normal; color: #999; margin-left: 4px; font-size: 12px; }
.tab.active { background: #3b3b3b; border-bottom-color: #3b3b3b; color: #c4c4c4; padding: 0 2px 0 1px; }
.pm { margin-left: auto; width: 24px; flex: none; display: grid; place-items: center; border-bottom: 1px solid #111; }
.end { width: 11px; border-left: 1px solid #0c0c0c; border-bottom: 1px solid #111; background: radial-gradient(#666 35%, transparent 40%) 3px 3px / 2px 2px; background-clip: content-box; padding: 3px; }
.sw { width: 10px; height: 10px; }
.tan { background: #b5a17b; } .blue { background: #657ee8; } .yellow { background: #f3e545; }

.project { width: 361px; flex: none; }
.fxtab { gap: 22px; padding: 0 38px 0 11px; }
.info { display: flex; gap: 5px; padding: 5px 4px 0; }
.thumb { width: 62px; height: 56px; margin-top: 1px; background: #000; border: 1px solid #000; border-top: 5px solid #999; display: flex; flex-direction: column; justify-content: flex-end; gap: 1px; }
.thumb i { height: 9px; background: #8f918f; } .thumb i:first-child { height: 5px; }
.meta { display: flex; flex-direction: column; line-height: 12px; }
.tri { display: inline-block; border: 3px solid transparent; border-top: 4px solid #ddd; border-bottom: 0; vertical-align: middle; }
.psearch { margin: 43px 6px 7px 5px; }
.list { flex: 1; min-height: 0; position: relative; overflow: hidden; border-top: 1px solid #111; }
table { width: 100%; table-layout: fixed; border-collapse: collapse; }
th { height: 17px; padding: 0; background: linear-gradient(#444, #363636); border-bottom: 1px solid #111; font-weight: normal; text-align: left; white-space: nowrap; font-size: 10px; }
td { height: 18px; padding: 0; border-bottom: 1px solid #303030; white-space: nowrap; overflow: hidden; }
.tw { width: 16px; border-right: 1px solid #222; }
.nm { padding-left: 2px; position: relative; }
.lb { width: 21px; border-left: 1px solid #222; border-right: 1px solid #222; padding-left: 2px; }
.ty { width: 72px; padding-left: 3px; }
.sz { width: 6px; border-left: 1px solid #222; }
td .sw { margin-left: 5px; } .tyd { padding-left: 4px; }
.sort { position: absolute; right: 3px; top: 5px; border: 6px solid transparent; border-bottom: 6px solid #888; border-top: 0; }
.item { display: flex; align-items: center; height: 17px; } .item span { flex: 1; padding-left: 2px; line-height: 16px; }
.picked { background: #454545; } .picked .item span { background: #c2c2c2; color: #151515; font-weight: bold; }
.twirl { width: 0; border: 4px solid transparent; border-left: 5px solid #999; border-right: 0; margin-left: 5px; }
.twirl.open { border: 4px solid transparent; border-top: 5px solid #999; border-bottom: 0; }
.rail { position: absolute; right: 0; top: 18px; bottom: 0; width: 15px; background: #2b2b2b; border-left: 1px solid #151515; display: flex; flex-direction: column; align-items: center; }
.rail .u, .rail .d { border: 5px solid transparent; }
.rail .u { border-bottom: 7px solid #666; border-top: 0; margin-top: 6px; }
.rail .d { border-top: 7px solid #666; border-bottom: 0; margin: auto 0 4px; }
.pfoot { height: 18px; flex: none; display: flex; align-items: center; border-top: 1px solid #222; padding: 0 16px 0 3px; gap: 8px; }
.pfoot .ico { height: 14px; }
.bin { margin: 0 -4px 0 6px; }
.hbar { display: flex; align-items: center; justify-content: space-between; background: #252725; border: 1px solid #151515; flex: 1; height: 17px; min-width: 0; }
.hbar i { width: 76px; height: 15px; background: #3c3c3c; border: 1px solid #151515; margin: 0 auto 0 4px; }

.viewer { flex: 1; }
.vt .ico { margin: 0 2px; } .vt .sw { margin-left: 1px; }
.tab.vt b { margin: 0 1px 0 3px; }
.vsel { width: 137px; } .vsel select { padding-left: 6px; color: #c8c8c8; }
.wide { width: 134px; justify-content: center; padding: 0 8px 0 0; } .foot { width: 148px; }
.crumb { height: 23px; flex: none; padding: 3px 17px; border-bottom: 1px solid #1c1c1c; }
.crumb button { display: block; width: 53px; height: 15px; background: #202020; border: 1px solid #000; line-height: 12px; color: #c0c0c0; }
.stage { flex: 1; min-height: 0; padding: 5px 0 3px; display: flex; justify-content: center; }
.canvas { height: 100%; max-width: 100%; aspect-ratio: 563 / 317; display: block; }
.vfoot { height: 22px; flex: none; display: flex; align-items: center; gap: 5px; padding-left: 2px; border-top: 1px solid #1c1c1c; white-space: nowrap; }
.vfoot > .ico { margin: 0 -1px; } .vfoot .sel select { padding-right: 14px; }
.vicons { display: flex; gap: 6px; margin-left: 0; }
.w62 { width: 62px; } .w79 { width: 80px; } .w96 { width: 96px; }
.pressed { background: #0e0e0e; display: grid; place-items: center; width: 18px; height: 17px; }
.tc { border: 1px solid #0c0c0c; background: linear-gradient(#484848, #353535); width: 63px; height: 17px; }
.vsep { width: 1px; height: 17px; background: #1a1a1a; }
.hot { color: #bd8720; border-bottom: 1px dotted #8d6418; line-height: 13px; }

.timeline { height: 221px; flex: none; display: flex; flex-direction: column; position: relative; }
.ttabs { height: 18px; } .ttabs .tab { border-bottom: 0; }
.rq { width: 91px; } .c1 { width: 77px; padding-left: 10px; } .c1 .sw, .c2 .sw { margin-right: 4px; }
.tab.active.c2 { border: 1px solid #a8781c; border-bottom: 0; padding: 0 2px 0 2px; }
.c2 .grip { margin-right: 3px; }
.tbody { flex: 1; min-height: 0; display: grid; grid-template-columns: 526px minmax(0, 1fr) 14px; background: #383838; border: 1px solid #8a651d; }
.tl, .tr { display: flex; flex-direction: column; min-width: 0; min-height: 0; }
.tl { border-right: 1px solid #1a1a1a; }
.tctl { height: 32px; flex: none; display: flex; align-items: center; padding-left: 9px; }
.time { width: 78px; color: #cf9213; display: flex; flex-direction: column; align-items: center; }
.time strong { font: bold 13px/15px "DejaVu Sans", sans-serif; border-bottom: 1px dotted #8d6418; }
.time span { font-size: 9px; line-height: 12px; color: #bd8720; white-space: nowrap; }
.tsearch { width: 164px; margin-left: 11px; }
.tbtns { display: flex; align-items: center; gap: 7px; margin-left: 11px; } .tbtns i { width: 0; }
.tbtns .pressed { width: 22px; height: 22px; margin: 0 -4px 0 4px; }
.thead { height: 18px; flex: none; display: flex; align-items: center; background: linear-gradient(#444, #363636); border-top: 1px solid #1a1a1a; border-bottom: 1px solid #111; font-size: 10px; }
.av { width: 64px; height: 12px; flex: none; display: flex; align-items: center; padding-left: 3px; gap: 2px; } .thead .av { gap: 0; border-right: 1px solid #222; }
.num { width: 60px; border-right: 1px solid #222; display: flex; align-items: center; height: 12px; padding-left: 10px; gap: 8px; }
.src { width: 149px; padding-left: 5px; border-right: 1px solid #222; height: 12px; line-height: 12px; }
.sws { width: 128px; display: flex; align-items: center; padding-left: 2px; border-right: 1px solid #222; height: 12px; }
.sws em { font: italic 13px/12px "Liberation Serif", serif; width: 14px; text-align: center; }
.par { width: 109px; padding-left: 4px; border-right: 1px solid #222; height: 12px; line-height: 12px; }
.rows { flex: 1; min-height: 0; overflow: hidden; display: flex; flex-direction: column; justify-content: flex-end; }
.row { height: 16px; flex: none; display: flex; align-items: center; border-top: 1px solid #2c2c2c; position: relative; line-height: 13px; }
.eyebox { border: 1px solid #333; border-bottom-color: #777; height: 13px; }
.nme { width: 209px; height: 15px; display: flex; align-items: center; padding-left: 48px; } .nme.prop { padding-left: 80px; }
.nme .twirl { margin-left: 4px; } .nme .twirl.open { margin-left: 2px; }
.nme span { padding-left: 8px; line-height: 14px; } .nme.prop span { padding-left: 5px; }
.nme .ico + .ico { margin-left: 5px; }
.nme.prop .kn { padding-left: 3px; margin-left: 3px; flex: 1; } .hl { background: #666; color: #ddd; }
.val { flex: 1; display: flex; align-items: center; padding-left: 4px; height: 15px; }
.mode { width: 119px; height: 14px; } .mode select { line-height: 12px; padding-left: 4px; } .mode::before { top: 4px; }
.nums { color: #c48c20; white-space: pre; line-height: 12px; } .nums u { text-decoration: none; border-bottom: 1px dotted #8d6418; }
.val input { appearance: none; width: 12px; height: 12px; border: 1px solid #2a2a2a; border-bottom-color: #888; margin-right: 4px; }
.tfoot { height: 17px; flex: none; display: flex; align-items: center; border-top: 1px solid #151515; padding-left: 4px; gap: 4px; }
.tfoot button { margin-left: 219px; width: 125px; height: 14px; line-height: 12px; border: 1px solid #111; background: #3f3f3f; color: #c8c8c8; font-size: 10px; }

.navi { height: 10px; margin: 3px 4px 0 1px; background: #4b4a3a; border: 1px solid #5e5c4a; flex: none; }
.navi i { width: 18px; height: 9px; background: linear-gradient(90deg, #c9971c 7px, #833 7px 8px, #888 8px 12px, #c9971c 12px); border: 1px solid #3b2c08; border-radius: 4px 0 0 0; }
.ruler { height: 17px; flex: none; position: relative; overflow: hidden; }
.tick { position: absolute; top: 0; height: 17px; transform: translateX(-50%); font-size: 10px; line-height: 11px; color: #b4b4b4; }
.tick::after { content: ""; position: absolute; left: 50%; bottom: 0; width: 1px; height: 4px; background: #aaa; }
.head { position: absolute; top: 1px; margin-left: -6px; }
.warea { height: 18px; flex: none; background: #717171; border-top: 1px solid #999; border-bottom: 3px solid #27a92c; }
.warea i { width: 7px; height: 14px; background: #c99414; border: 1px solid #33260a; border-right: 1px solid #d22; }
.tracks { background: #474747; position: relative; } .tracks .row { border-color: #383838; }
.kf { position: absolute; top: 50%; transform: translate(-50%, -50%); }
.red { position: absolute; top: 0; bottom: 0; width: 2px; margin-left: -1px; background: #a11f1f; }
.zoombar > input { appearance: none; width: 44px; height: 4px; background: #0c0c0c; margin-left: 9px; }
.zoombar > input::-webkit-slider-thumb { appearance: none; width: 7px; height: 8px; background: #555; border: 1px solid #111; }
.zoombar .hbar { border-bottom: 0; height: 16px; margin-left: 2px; } .zoombar .hbar i { width: 16px; height: 14px; }
.trail { display: flex; flex-direction: column; align-items: center; border-left: 1px solid #1a1a1a; padding-bottom: 17px; }
.mk { margin-top: 32px; height: 20px; } .cb { height: 16px; }
.trail i { width: 13px; height: 42px; background: #444; border: 1px solid #111; margin: auto 0 20px; }
.mouse { position: absolute; left: 472px; top: 61px; }

.rightcol { width: 193px; flex: none; display: flex; flex-direction: column; }
.audio { height: 180px; flex: none; } .inf { width: 44px; }
.abody { flex: 1; display: flex; min-height: 0; padding: 9px 8px 5px; font-size: 10px; }
.meter { width: 23px; display: flex; gap: 1px; border-top: 3px solid #0a0a0a; padding-top: 3px; background: linear-gradient(#383838 3px, #080808 3px); }
.meter i { flex: 1; background: linear-gradient(#7a2411, #706510 20%, #1f7013 34%, #0f5a12 50%, #12371a 70%); }
.mlab { width: 32px; margin-left: 8px; display: flex; flex-direction: column; justify-content: space-between; line-height: 12px; padding-top: 2px; } .mlab span:first-child { padding-left: 3px; }
.sliders { display: flex; margin-left: 4px; padding-top: 6px; }
.sliders label { width: 21px; display: flex; flex-direction: column; align-items: center; color: #666; }
.sliders input { writing-mode: vertical-lr; direction: rtl; appearance: none; width: 16px; height: 121px; background: linear-gradient(90deg, transparent 6px, #222 6px 7px, #444 7px 9px, #222 9px 10px, transparent 10px); }
.sliders input::-webkit-slider-thumb { appearance: none; width: 16px; height: 10px; background: #505050; clip-path: polygon(0 50%, 30% 0, 100% 0, 100% 100%, 30% 100%); }
.sliders .k2::-webkit-slider-thumb { clip-path: polygon(0 50%, 30% 0, 70% 0, 100% 50%, 70% 100%, 30% 100%); }
.sliders .k3::-webkit-slider-thumb { clip-path: polygon(0 0, 70% 0, 100% 50%, 70% 100%, 0 100%); }
.sliders span { margin-top: 5px; line-height: 10px; border-bottom: 1px dotted #555; }
.slab { display: flex; flex-direction: column; justify-content: space-between; line-height: 12px; margin-left: 3px; padding: 2px 0 14px; white-space: nowrap; } .slab span:nth-child(-n+2) { padding-left: 3px; }
.preview { height: 45px; margin-top: 5px; flex: none; }
.pbtns { display: flex; align-items: center; height: 26px; padding-left: 3px; }
.pbtns button { width: 22px; display: grid; place-items: center; flex: none; } .pbtns button:nth-child(n+6) { width: 25px; } .pbtns button:nth-child(6) { margin-left: 3px; }
.strip { width: 133px; height: 4px; background: #3d3d3d; margin: 4px 0 2px; } .rt { margin-left: 63px; width: 129px; }
.effects { flex: 1; min-height: 0; } .br { padding: 0 3px 0 10px; } .effects .pm { width: auto; flex: 1; }
.esearch { margin: 2px 5px 3px 4px; flex: none; }
.elist { flex: 1; min-height: 0; display: flex; border-top: 1px solid #111; overflow: hidden; }
ul { flex: 1; margin: 0; padding: 0; list-style: none; }
li { height: 16px; line-height: 13px; display: flex; align-items: flex-start; gap: 4px; border-bottom: 1px solid #323232; color: #c4c4c4; } li .twirl { margin-top: 3px; }
.erail { width: 15px; background: #2a2a2a; border-left: 1px solid #111; display: flex; flex-direction: column; align-items: center; padding: 2px 0; } .erail i { width: 14px; height: 15px; background: #3f3f3f; border: 1px solid #181818; margin: 2px 0 auto; }
.efoot { height: 16px; flex: none; border-top: 1px solid #151515; display: flex; justify-content: flex-end; padding: 2px 23px 0 0; }

.tracker { height: 216px; flex: none; } .nt { width: 22px; padding: 0 0 0 1px; } .pg { width: 74px; padding: 0 0 0 10px; }
.kbody { flex: 1; padding: 7px 6px 0 7px; display: flex; flex-direction: column; gap: 4px; }
.pair { display: grid; grid-template-columns: 1fr 1fr; gap: 6px; margin-bottom: 2px; } .pair button { height: 17px; border: 1px solid #2a2a2a; color: #6e6e6e; }
.krow { display: flex; align-items: center; gap: 3px; color: #d0d0d0; } .krow label { flex: 1; text-align: right; white-space: nowrap; } .krow .sel { width: 104px; }
.dim { color: #6e6e6e; } .krow.dim .sel { background: none; border-color: #2a2a2a; } .krow.dim .sel::before { border-top-color: #6a6a6a; }
.checks { display: flex; gap: 9px; height: 16px; margin-top: 1px; } .checks label { display: flex; align-items: center; gap: 4px; }
.checks input { appearance: none; width: 11px; height: 11px; border: 1px solid #2a2a2a; position: relative; }
.checks input:checked::after { content: ""; position: absolute; left: 3px; top: 0; width: 3px; height: 6px; border: solid #999; border-width: 0 2px 2px 0; transform: rotate(40deg); }
.mt { margin-bottom: 1px; } .narrow { padding: 0 4px; gap: 10px; margin: 0; }
.ana { display: flex; align-items: center; gap: 12px; padding-left: 22px; margin-top: 2px; }

.taskbar { height: 38px; flex: none; background: #020203; display: flex; align-items: stretch; font-family: Lato, sans-serif; color: #eee; }
.taskbar > button { display: grid; place-items: center; }
.start { width: 48px; }
.cortana { width: 322px; background: #272727; display: flex; align-items: center; padding: 0 11px 0 7px; gap: 8px; } .cortana input { flex: 1; font-size: 14px; min-width: 0; } .cortana input::placeholder { color: #a5a5a5; opacity: 1; }
.tv { width: 48px; padding-right: 3px; } .app1 { width: 45px; background: #2a3034; border-bottom: 2px solid #9ccdf0; } .app2 { width: 37px; margin-left: 5px; border-bottom: 2px solid #9ccdf0; }
.tray { margin-left: auto; display: flex; align-items: center; gap: 7px; font-family: Roboto, sans-serif; }
.nudge { width: 15px; height: 36px; margin-right: 3px; align-self: flex-end; background: #f0f0f0; display: flex; flex-direction: column; justify-content: space-between; align-items: center; } .nudge .ico { filter: brightness(.3); }
.qm { margin-right: 2px; } .ink { margin-left: 3px; }
.lang { margin: 0 4px 0 5px; }
.clock { display: flex; flex-direction: column; align-items: center; line-height: 16px; margin-right: 8px; width: 56px; white-space: nowrap; }
.peek { width: 1px; height: 38px; background: #444; margin: 0 6px 0 12px; }
</style>
